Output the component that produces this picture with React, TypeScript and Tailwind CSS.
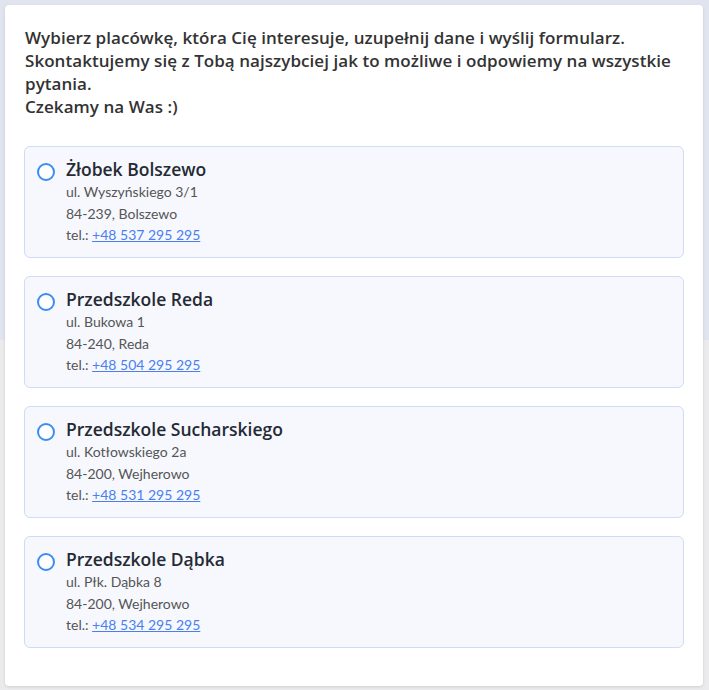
import React from "react";

const places = [
  { name: "Żłobek Bolszewo", street: "ul. Wyszyńskiego 3/1", city: "84-239, Bolszewo", tel: "+48 537 295 295" },
  { name: "Przedszkole Reda", street: "ul. Bukowa 1", city: "84-240, Reda", tel: "+48 504 295 295" },
  { name: "Przedszkole Sucharskiego", street: "ul. Kotłowskiego 2a", city: "84-200, Wejherowo", tel: "+48 531 295 295" },
  { name: "Przedszkole Dąbka", street: "ul. Płk. Dąbka 8", city: "84-200, Wejherowo", tel: "+48 534 295 295" },
];

export default function App() {
  return (
    <div
      className="w-[709px] h-[690px] pt-[5px] pl-[5px] pr-[6px] pb-[4px] bg-[linear-gradient(#dfe4ef_0px,#dfe4ef_340px,#ebebee_340px)]"
      style={{ fontFamily: "Lato, 'Noto Sans', sans-serif" }}
    >
      <div className="h-[681px] bg-white rounded-[4px] shadow-[0_1px_3px_rgba(0,0,0,0.12)] px-[19px] pt-[21px]">
        <p
          className="pl-[1px] text-[17px] leading-[23px] font-semibold text-[#333] tracking-[0.05px]"
          style={{ fontFamily: "'Open Sans', sans-serif" }}
        >
          Wybierz placówkę, która Cię interesuje, uzupełnij dane i wyślij formularz.
          <br />
          Skontaktujemy się z Tobą najszybciej jak to możliwe i odpowiemy na wszystkie pytania.
          <br />
          Czekamy na Was :)
        </p>
        <div className="mt-[28px] flex flex-col gap-[18px]">
          {places.map((p) => (
            <label
              key={p.name}
              className="flex items-start h-[112px] rounded-[6px] border border-[#cfdcf5] bg-[#f6f8fe] pl-[12px] pt-[11px]"
            >
              <span className="mt-[5px] w-[18px] h-[18px] rounded-full border-2 border-[#3b8cf7] bg-white shrink-0" />
              <span className="ml-[11px] flex flex-col">
                <span
                  className="text-[17.5px] leading-[23px] font-semibold text-[#252a33]"
                  style={{ fontFamily: "'Open Sans', sans-serif" }}
                >
                  {p.name}
                </span>
                <span className="text-[14px] leading-[21.5px] text-[#555]">{p.street}</span>
                <span className="text-[14px] leading-[21.5px] text-[#555]">{p.city}</span>
                <span className="text-[14px] leading-[21.5px] text-[#555]">
                  tel.:{" "}
                  <a href="#" className="text-[#4a7ff0] underline">
                    {p.tel}
                  </a>
                </span>
              </span>
            </label>
          ))}
        </div>
      </div>
    </div>
  );
}
